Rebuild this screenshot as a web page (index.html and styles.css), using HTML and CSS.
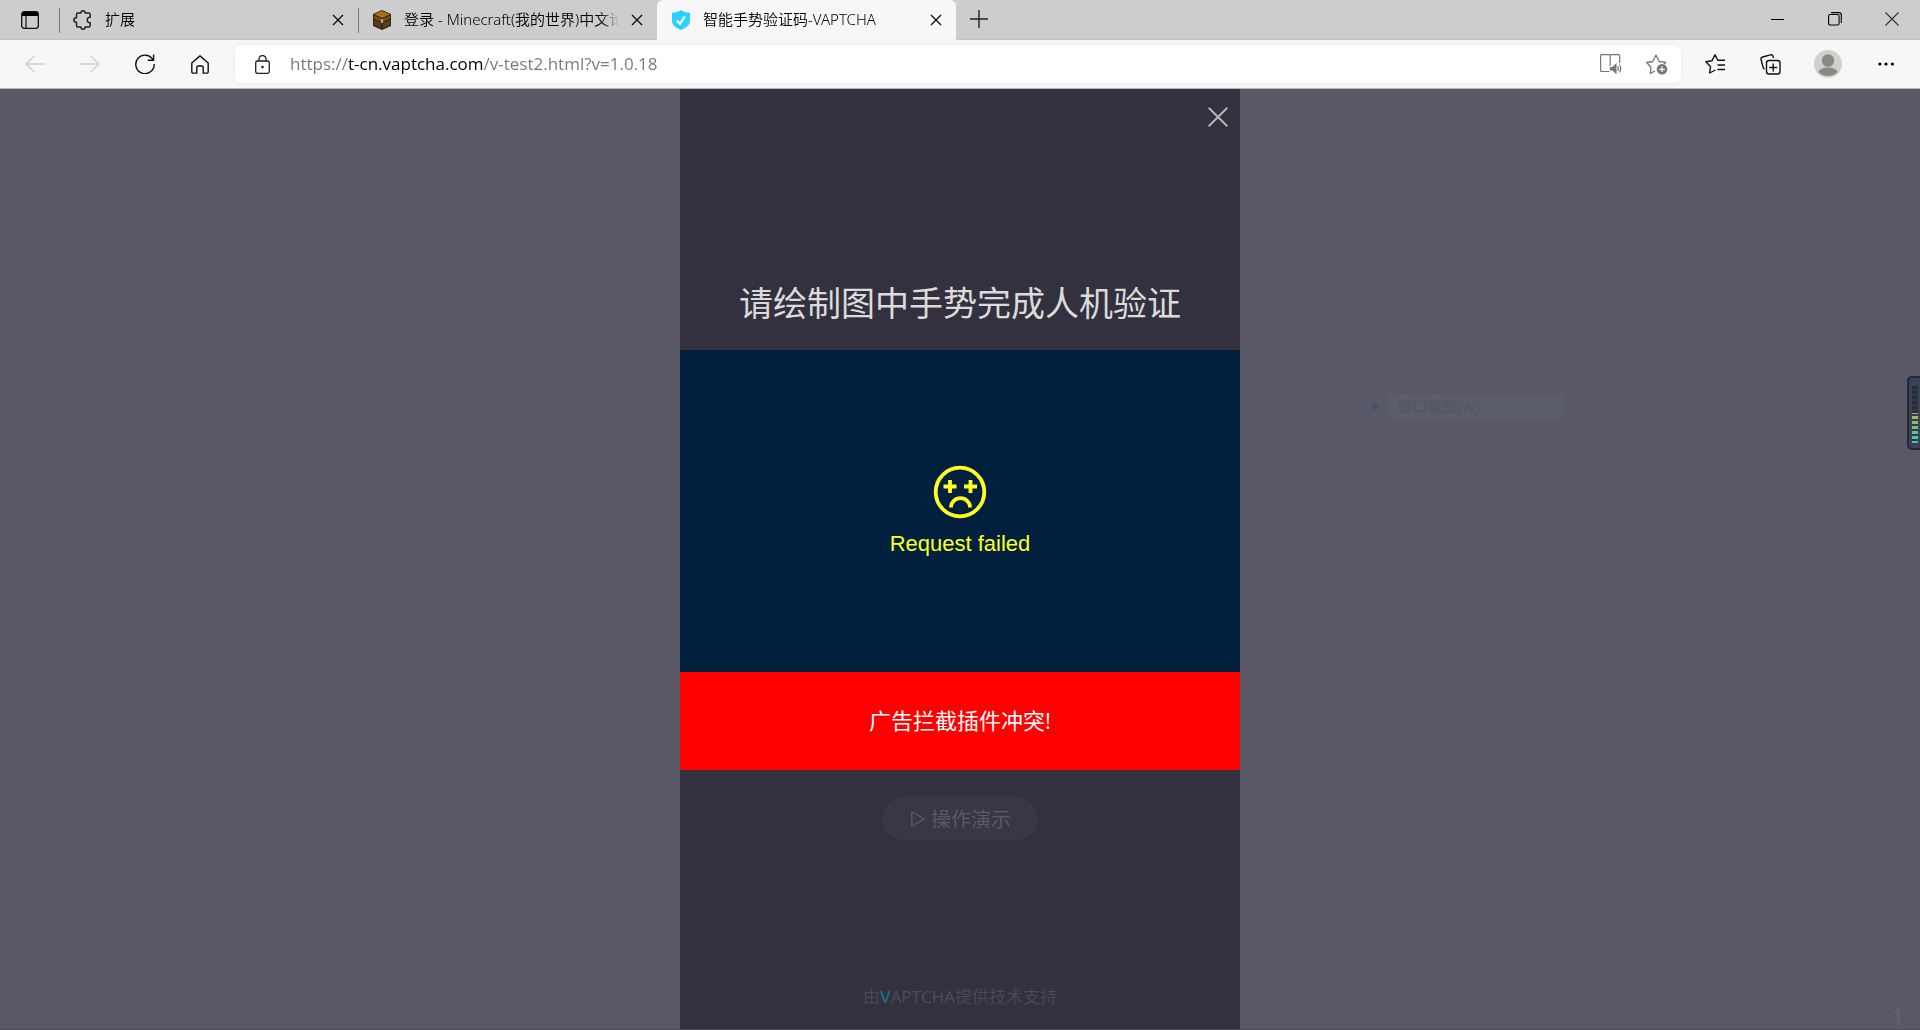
FILE: index.html
```html
<!DOCTYPE html>
<html lang="zh-CN">
<head>
<meta charset="utf-8">
<title>智能手势验证码-VAPTCHA</title>
<link rel="stylesheet" href="styles.css">
</head>
<body>
<header class="browser">
  <div class="tabbar">
    <button class="tab-menu" aria-label="Tab actions">
      <svg width="18" height="18" viewBox="0 0 18 18"><rect x="0.7" y="0.7" width="16.6" height="16.6" rx="2.5" fill="none" stroke="#111" stroke-width="1.3"/><path d="M1 5V3a2 2 0 0 1 2-2h12a2 2 0 0 1 2 2v2z" fill="#000"/><path d="M5 5v12" stroke="#111" stroke-width="1.2"/></svg>
    </button>
    <div class="tab tab-divided">
      <svg width="20" height="20" viewBox="0 0 20 20" fill="none" stroke="#222" stroke-width="1.5" stroke-linejoin="round"><path d="M5 3h3C7.800 1.600 8.700.8 10 .8s2.200.8 2 2.200h3.700c.9 0 1.500.6 1.500 1.500v2.800c-1.700-.3-3 .9-3 2.700s1.300 3 3 2.700v2.800c0 .9-.6 1.500-1.500 1.500H12c.2 1.400-.7 2.200-2 2.200s-2.200-.8-2-2.200H5c-.9 0-1.500-.6-1.500-1.500v-3.200C1.800 12.300.8 11.400.8 10s1-2.300 2.700-2.300V4.500C3.500 3.600 4.100 3 5 3z"/></svg>
      <span class="tab-title">扩展</span>
      <button class="tab-close" aria-label="Close tab"><svg width="12" height="12" viewBox="0 0 12 12"><path d="M1 1l10 10M11 1L1 11" stroke="#111" stroke-width="1.4"/></svg></button>
    </div>
    <div class="tab tab-divided">
      <svg width="20" height="20" viewBox="0 0 20 20"><path d="M10 0l9 4v12l-9 4-9-4V4z" fill="#38260f"/><path d="M10 1l8 3.300-8 3.700-8-3.700z" fill="#a96d1d"/><path d="M2 5.500l7 3.200v3L2 8.500zM18 5.500l-7 3.200v3l7-3.200z" fill="#7a4f1a"/><path d="M2 10l7 3v5l-7-3zM18 10l-7 3v5l7-3z" fill="#5d3d16"/><path d="M9 9h2v4H9z" fill="#aaa89a"/></svg>
      <span class="tab-title">登录 - Minecraft(我的世界)中文论坛</span>
      <button class="tab-close" aria-label="Close tab"><svg width="12" height="12" viewBox="0 0 12 12"><path d="M1 1l10 10M11 1L1 11" stroke="#111" stroke-width="1.4"/></svg></button>
    </div>
    <div class="tab tab-active">
      <svg width="20" height="20" viewBox="0 0 20 20"><path d="M10 0c2.500 1.700 5.500 2.600 9 2.800V11c0 4.300-4.300 7-9 9-4.700-2-9-4.700-9-9V2.800C4.500 2.600 7.500 1.700 10 0z" fill="#28d2ff"/><path d="M5.800 10.500l3.200 3.300 4.800-7.500" fill="none" stroke="#fff" stroke-width="2.200"/></svg>
      <span class="tab-title">智能手势验证码-VAPTCHA</span>
      <button class="tab-close" aria-label="Close tab"><svg width="12" height="12" viewBox="0 0 12 12"><path d="M1 1l10 10M11 1L1 11" stroke="#111" stroke-width="1.4"/></svg></button>
    </div>
    <button class="new-tab" aria-label="New tab"><svg width="18" height="18" viewBox="0 0 18 18"><path d="M9 0v18M0 9h18" stroke="#222" stroke-width="1.400"/></svg></button>
    <div class="window-buttons">
      <button aria-label="Minimize"><svg width="14" height="14" viewBox="0 0 14 14"><path d="M0 7.500h13" stroke="#000"/></svg></button>
      <button aria-label="Restore"><svg width="14" height="14" viewBox="0 0 14 14" fill="none" stroke="#000" stroke-width="1.100"><rect x=".6" y="2.500" width="10.500" height="10.500" rx="1.500"/><path d="M3 .6h8a2.300 2.300 0 0 1 2.300 2.300V11"/></svg></button>
      <button aria-label="Close"><svg width="14" height="14" viewBox="0 0 14 14"><path d="M.5.5l13 13M13.500.5l-13 13" stroke="#333" stroke-width="1.100"/></svg></button>
    </div>
  </div>
  <nav class="toolbar">
    <button class="tool" aria-label="Back" disabled><svg width="20" height="18" viewBox="0 0 20 18" fill="none" stroke="#cfcfcf" stroke-width="1.400"><path d="M20 9H1M9.500.8L1 9l8.500 8.200"/></svg></button>
    <button class="tool" aria-label="Forward" disabled><svg width="20" height="18" viewBox="0 0 20 18" fill="none" stroke="#cfcfcf" stroke-width="1.400"><path d="M0 9h19M10.500.8L19 9l-8.500 8.200"/></svg></button>
    <button class="tool" aria-label="Refresh"><svg width="20" height="20" viewBox="0 0 20 20" fill="none" stroke="#111" stroke-width="1.400"><path d="M18.200 6.200A9.200 9.200 0 1 0 19.200 10M18.600.5v5.800h-5.800"/></svg></button>
    <button class="tool" aria-label="Home"><svg width="18" height="19" viewBox="0 0 18 19" fill="none" stroke="#111" stroke-width="1.400" stroke-linejoin="round"><path d="M.8 8L9 .9 17.200 8v9c0 .7-.4 1.100-1.100 1.100h-3.900V12.500c0-.9-.6-1.500-1.500-1.500H7.300c-.9 0-1.500.6-1.500 1.500v5.600H1.900c-.7 0-1.100-.4-1.100-1.100z"/></svg></button>
    <div class="address">
      <svg width="15" height="19" viewBox="0 0 15 19" fill="none" stroke="#222" stroke-width="1.300"><rect x=".7" y="6" width="13.600" height="12.300" rx="1.800"/><path d="M4 6V4a3.500 3.500 0 0 1 7 0v2"/><circle cx="7.500" cy="12" r="1.300" fill="#222" stroke="none"/></svg>
      <input class="url" type="text" aria-label="Address" value="https://t-cn.vaptcha.com/v-test2.html?v=1.0.18">
      <button aria-label="Read aloud"><svg width="22" height="20" viewBox="0 0 22 20" fill="none" stroke="#767676" stroke-width="1.200"><path d="M9.500 17.500H1.600c-.6 0-1-.3-1-1V1.600c0-.6.4-1 1-1H9c.7 0 1.200.5 1.200 1.200V12M10.200 1.800c0-.7.500-1.200 1.200-1.200h7.300c.6 0 1 .4 1 1V9"/><path d="M10.500 13.500h2.200l3.200-3v8.500l-3.200-3h-2.200z" fill="#767676"/><path d="M17.500 12.300q1.600 2.200 0 4.700M19.300 10.500q3 4 0 8"/></svg></button>
      <button aria-label="Add to favorites"><svg width="22" height="21" viewBox="0 0 22 21" fill="none" stroke="#767676" stroke-width="1.300" stroke-linejoin="round"><path d="M9 17l-4.700 2.300.6-6L.7 8.500l6-1L10 1l3.200 6.500 6.600.8-2 2"/><circle cx="16" cy="15.300" r="5.300" fill="#767676" stroke="none"/><path d="M16 12.500v5.600M13.200 15.300h5.600" stroke="#fff"/></svg></button>
    </div>
    <button class="tool" aria-label="Favorites"><svg width="21" height="20" viewBox="0 0 21 20" fill="none" stroke="#111" stroke-width="1.400" stroke-linejoin="round"><path d="M10.500 16l-5.900 3 .9-6.500L.8 7.800l6.200-1L10 .8l2.800 5.500H20M12.500 11H20M12.500 15.500H20"/></svg></button>
    <button class="tool" aria-label="Collections"><svg width="21" height="21" viewBox="0 0 21 21" fill="none" stroke="#111" stroke-width="1.400"><rect x="6.500" y="6.500" width="13.500" height="13.500" rx="2.500"/><path d="M13.200 9.500v8M9.200 13.500h8M4.500 15.200Q3.300 14.500 3 13L1 5.400Q.7 3.500 2.500 3L10.500.9q2-.5 2.600 1.500l.5 1.600"/></svg></button>
    <button class="tool profile" aria-label="Profile"><svg width="28" height="28" viewBox="0 0 28 28"><circle cx="14" cy="14" r="14" fill="#d2d0cd"/><circle cx="14" cy="10.500" r="6.300" fill="#8b8885"/><path d="M4.300 22a10 6 0 0 1 19.400 0A13.500 13.500 0 0 1 4.300 22z" fill="#8b8885"/></svg></button>
    <button class="tool" aria-label="Settings and more"><svg width="16" height="4" viewBox="0 0 16 4"><circle cx="1.900" cy="2" r="1.600"/><circle cx="8" cy="2" r="1.600"/><circle cx="14.400" cy="2" r="1.600"/></svg></button>
  </nav>
</header>
<main class="page">
  <section class="panel">
    <div class="heading">
      <button class="panel-close" aria-label="Close"><svg width="20" height="20" viewBox="0 0 20 20"><path d="M.7.700l18.600 18.600M19.300.7L.7 19.300" stroke="#b5b4b3" stroke-width="2"/></svg></button>
      <h1>请绘制图中手势完成人机验证</h1>
    </div>
    <div class="canvas">
      <svg width="54" height="54" viewBox="0 0 54 54" fill="none" stroke="#ffff22" stroke-width="3.800"><circle cx="27" cy="27" r="24.300"/><path d="M10.500 21.500h13M17 15v13M31 21.500h13M37.500 15v13"/><path d="M18 42.500a9.500 9.300 0 0 1 19 0"/></svg>
      <p>Request failed</p>
    </div>
    <p class="warning">广告拦截插件冲突!</p>
    <button class="demo"><svg width="14" height="16" viewBox="0 0 14 16" fill="none" stroke="#5d5b67" stroke-width="1.300" stroke-linejoin="round"><path d="M.8.8v14.400L13.200 8z"/></svg>操作演示</button>
    <footer>由<b>V</b><span>APTCHA</span>提供技术支持</footer>
  </section>
  <div class="menu-ghost"><i></i><span>窗口截图(W)</span></div>
  <div class="meter"></div>
  <span class="page-number">1</span>
</main>
</body>
</html>
```
FILE: styles.css
```css
* { box-sizing: border-box; }
body {
  margin: 0;
  min-height: 100vh;
  display: flex;
  flex-direction: column;
  font-family: "Open Sans", "Noto Sans CJK SC", sans-serif;
  font-size: 15px;
  color: #000;
}
h1, p { margin: 0; font-weight: 400; }
button { border: 0; padding: 0; background: none; font: inherit; color: inherit; display: flex; align-items: center; justify-content: center; }
svg { display: block; flex: none; }

.tabbar { display: flex; height: 40px; background: #cdcdcd; box-shadow: inset 0 -1px #c2c2c2; }
.tab-menu { width: 59px; }
.tab { position: relative; width: 299px; display: flex; align-items: center; gap: 12px; padding: 0 14px; }
.tab-divided::before { content: ""; position: absolute; left: 0; top: 8px; width: 1px; height: 25px; background: #777; }
.tab-title {
  flex: 1;
  overflow: hidden;
  white-space: nowrap;
  font-size: 15px;
  font-family: "Noto Sans", "Noto Sans CJK SC", sans-serif;
  font-weight: 350;
  line-height: 24px;
  padding-bottom: 2px;
  mask-image: linear-gradient(to left, transparent, #000 20px);
}
.tab-active { background: #f7f7f7; border-radius: 6px 6px 0 0; }
.new-tab { width: 46px; height: 38px; }
.window-buttons { margin-left: auto; display: flex; height: 38px; }
.window-buttons button { width: 57px; }

.toolbar { display: flex; align-items: center; height: 49px; padding: 0 7px; background: #f7f7f7; border-bottom: 1px solid #b5b5b5; }
.tool { width: 55px; height: 40px; }
.profile { width: 60px; }
.address { flex: 1; display: flex; align-items: center; height: 38px; margin: 0 7px 0 8px; padding: 0 11px 0 20px; background: #fff; border-radius: 6px; box-shadow: 0 0 4px #e6e6e6; gap: 20px; }
.url {
  flex: 1;
  min-width: 0;
  border: 0;
  padding: 0;
  font: 400 17px/26px "Open Sans", sans-serif;
  color: transparent;
  background: linear-gradient(90deg, #777 58px, #000 58px 193px, #777 193px);
  background-clip: text;
}
.address button { width: 26px; }

.page { position: relative; flex: 1; display: flex; justify-content: center; background: #595864; border-bottom: 1px solid #504d5b; }
.panel { width: 560px; display: flex; flex-direction: column; align-items: center; background: #33313f; }
.heading { align-self: stretch; height: 261px; padding: 18px 12px 22px; display: flex; flex-direction: column; justify-content: space-between; align-items: center; }
.panel-close { align-self: flex-end; }
.heading h1 { font-size: 34px; line-height: 50px; color: #dcdbda; }
.canvas { align-self: stretch; height: 322px; padding-top: 2px; display: flex; flex-direction: column; align-items: center; justify-content: center; gap: 10px; background: #00203d; color: #ffff22; }
.canvas p { font: 22px/30px "Liberation Sans", sans-serif; }
.warning { align-self: stretch; padding: 32px 0 34px; background: #f00; color: #fff; font-size: 22px; line-height: 32px; text-align: center; }
.demo { margin-top: 27px; width: 156px; height: 43px; padding-left: 2px; gap: 6px; border-radius: 22px; background: #393745; color: #5d5b67; font-size: 20px; font-weight: 350; }
.panel footer { margin-top: auto; padding-bottom: 20px; font-size: 17px; font-weight: 350; line-height: 24px; color: #4b4a56; }
footer b { color: #276686; font-weight: 600; }
footer span { color: #4e4e51; font-weight: 400; }

.menu-ghost { position: absolute; left: 71%; top: 305px; width: 200px; height: 24px; display: flex; align-items: center; background: #5a5e6a; color: #555461; }
.menu-ghost i { position: relative; width: 24px; height: 24px; background: #565a6a; }
.menu-ghost i::after { content: ""; position: absolute; inset: 8px; border-radius: 50%; background: #53535f; }
.menu-ghost span { margin-left: 10px; line-height: 24px; }
.meter { position: absolute; right: 0; top: 287px; width: 13px; height: 74px; border: solid #252736; border-width: 2px 0 2px 2px; border-radius: 5px 0 0 5px; background:
  repeating-linear-gradient(transparent 0 3px, #31394b 3px 5px) 3px 8px / 6px 57px no-repeat,
  linear-gradient(#242b39 0 27px, #b8b84c 27px, #68c276 43px, #35c8bd 57px) 3px 8px / 6px 57px no-repeat,
  #3b4156; }
.page-number { position: absolute; right: 16px; bottom: 0; font: 400 22px/26px "Open Sans", sans-serif; color: #666571; }
```
